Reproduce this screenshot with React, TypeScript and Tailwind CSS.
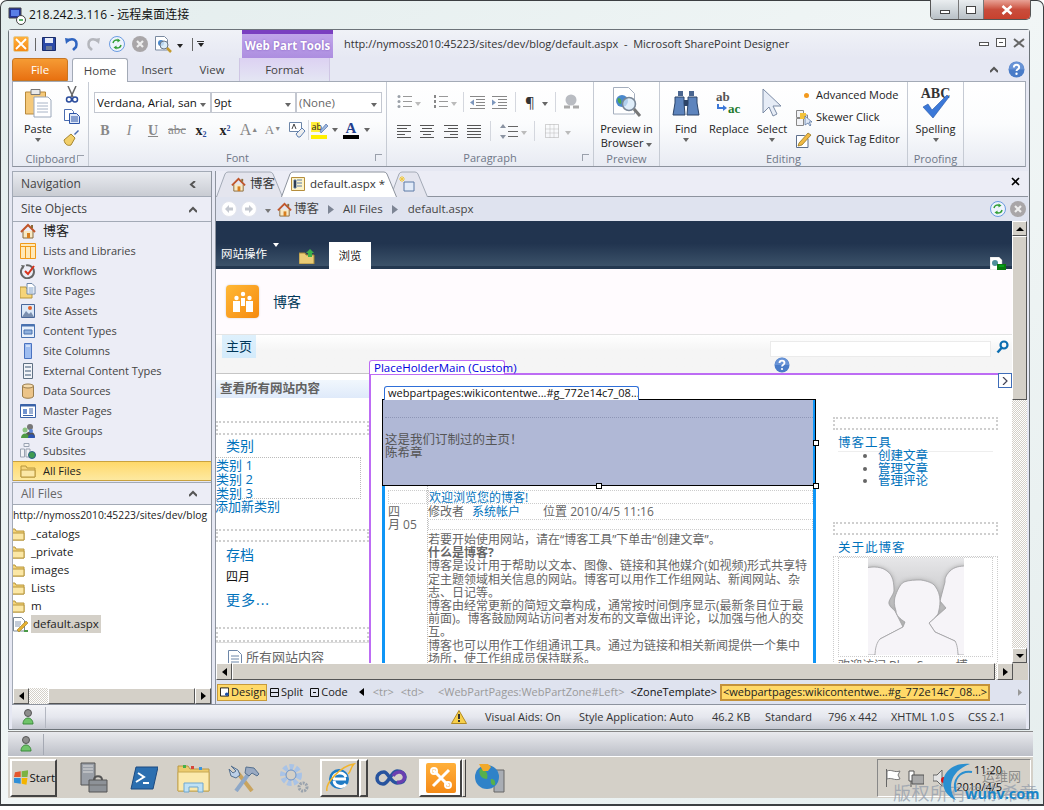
import React from 'react';

const BLUE = 'text-[#0072bc]';
const hatch = 'bg-[repeating-conic-gradient(#d4d0c8_0_25%,#ffffff_0_50%)] bg-[length:2px_2px]';
const bevel = 'bg-[#d4d0c8] border border-t-white border-l-white border-r-[#555] border-b-[#555]';

const Tri = ({ c = 'border-t-[#666]' }: { c?: string }) => (
  <span className={`inline-block w-0 h-0 border-x-[3px] border-x-transparent border-t-[4px] ${c}`} />
);

type P = { s?: number };
const FolderIc = ({ s = 16 }: P) => (
  <svg width={s} height={s} viewBox="0 0 16 16"><path d="M1 3h5l1 2h8v9H1z" fill="#f5d479" stroke="#b8963c" /><path d="M1 7h14v7H1z" fill="#fbe7a6" stroke="#b8963c" /></svg>
);
const HouseIc = ({ s = 16 }: P) => (
  <svg width={s} height={s} viewBox="0 0 16 16"><path d="M3 8v7h10V8" fill="#f8e9c4" stroke="#8a6b3a" /><path d="M1 9l7-7 7 7" fill="none" stroke="#c0552a" strokeWidth="2" /><path d="M11 2h2v3h-2z" fill="#8a6b3a" /><path d="M7 10h3v5H7z" fill="#d87f1e" /></svg>
);
const TableIc = () => (
  <svg width="16" height="16" viewBox="0 0 16 16"><path d="M.5.5h15v15H.5z" fill="#ffe9b8" stroke="#f09a1a" /><path d="M.5 3.5h15M5.5 3v12M10.5 3v12" stroke="#f09a1a" /></svg>
);
const WorkflowIc = () => (
  <svg width="16" height="16" viewBox="0 0 16 16"><path d="M3 4a6.5 6.5 0 1 0 3-1.6" fill="none" stroke="#666" strokeWidth="2" /><path d="M1 2l4 .5L3 6z" fill="#666" /><path d="M5 8l3 3 6-8" fill="none" stroke="#d8321c" strokeWidth="2" /></svg>
);
const PagesIc = () => (
  <svg width="16" height="16" viewBox="0 0 16 16"><path d="M0 4h6l1 2h5v9H0z" fill="#f5d479" stroke="#b8963c" /><path d="M7 .5h5l3 3V11H7z" fill="#fff" stroke="#6d86a8" /><path d="M8.5 5h5M8.5 7h5M8.5 9h5" stroke="#7b9cc6" /></svg>
);
const AssetsIc = () => (
  <svg width="16" height="16" viewBox="0 0 16 16"><path d="M1.5 1.5h13v13h-13z" fill="#dbe8f8" stroke="#49679a" /><path d="M2 14l4-6 3 3 2-2 3 5z" fill="#7a8fb0" /><circle cx="10" cy="5" r="2" fill="#e2622c" /></svg>
);
const CTypeIc = () => (
  <svg width="16" height="16" viewBox="0 0 16 16"><path d="M1.5 1.5h13v13h-13z" fill="#e8f0fb" stroke="#4a72b0" /><path d="M1.5 1.5h13v2h-13z" fill="#4a72b0" /><path d="M4 7h8v4H4z" fill="#8fb0dc" stroke="#4a72b0" /></svg>
);
const ColumnIc = () => (
  <svg width="16" height="16" viewBox="0 0 16 16"><path d="M4.5.5h7v15h-7z" fill="#9fbdf0" stroke="#4a72c0" /><path d="M6 3h4" stroke="#fff" /></svg>
);
const ExtIc = () => (
  <svg width="16" height="16" viewBox="0 0 16 16"><path d="M3.5.5h9v15h-9z" fill="#f1f3f8" stroke="#5f7083" /><path d="M5 4h6M5 8h6M5 12h6" stroke="#7a8ca0" strokeWidth="1.5" /></svg>
);
const DbIc = () => (
  <svg width="16" height="16" viewBox="0 0 16 16"><path d="M2.5 3v10c0 3 11 3 11 0V3z" fill="#ecc489" stroke="#9a7d4d" /><ellipse cx="8" cy="3" rx="5.5" ry="2" fill="#f6dcae" stroke="#9a7d4d" /></svg>
);
const MasterIc = () => (
  <svg width="16" height="16" viewBox="0 0 16 16"><path d="M.5 1.5h15v13H.5z" fill="#fff" stroke="#3b63a8" /><path d="M.5 1.5h15v2H.5z" fill="#3b63a8" /><path d="M3 6h4v5H3z" fill="#6f92cf" /><path d="M9 6h4M9 8h4M9 10h4M3 12.5h10" stroke="#3b63a8" /></svg>
);
const GroupsIc = () => (
  <svg width="16" height="16" viewBox="0 0 16 16"><circle cx="10" cy="4" r="3" fill="#777" /><path d="M5 14c0-7 10-7 10 0z" fill="#555" /><circle cx="5" cy="7" r="2.5" fill="#8cc480" /><path d="M1 15c0-6 8-6 8 0z" fill="#4e9a44" /><circle cx="11" cy="8" r="2" fill="#5b83d6" /><path d="M8 15c0-5 7-5 7 0z" fill="#2c54b0" /></svg>
);
const SubsitesIc = () => (
  <svg width="16" height="16" viewBox="0 0 16 16"><path d="M4 .5h5v3H4zM.5 6h4v8h-4zM6 6h4v8H6z" fill="#f2f3f7" stroke="#9aa3b2" /><circle cx="12" cy="12" r="3.5" fill="#3e9b50" stroke="#2b5f8a" /></svg>
);
const DocPenIc = () => (
  <svg width="16" height="16" viewBox="0 0 16 16"><path d="M1.5 1.5h8l3 3V15h-11z" fill="#fff" stroke="#7b8794" /><path d="M3 6h6M3 8h6M3 10h5" stroke="#8797b0" /><path d="M5 14l9-9 2 2-9 9z" fill="#e6b030" stroke="#8a6a10" strokeWidth=".5" /><path d="M12 14h4v2h-4z" fill="#4a9a48" /></svg>
);
const UserIc = () => (
  <svg width="12" height="16" viewBox="0 0 12 16"><circle cx="6" cy="4" r="3.5" fill="#8d8d8d" stroke="#555" /><path d="M1 15c0-8 10-8 10 0z" fill="#6fc46a" stroke="#3b8a3b" /></svg>
);
const HelpIc = ({ s = 16 }: P) => (
  <svg width={s} height={s} viewBox="0 0 16 16"><circle cx="8" cy="8" r="7.5" fill="#4a7cc8" /><path d="M.8 8a7.2 7.2 0 0 1 14.4 0z" fill="#7da4e0" opacity=".6" /><path d="M5.5 6c0-3.2 5-3.2 5 0 0 1.8-2.5 1.8-2.5 3.5" fill="none" stroke="#fff" strokeWidth="1.8" /><circle cx="8" cy="12" r="1.1" fill="#fff" /></svg>
);
const RefreshIc = ({ s = 16 }: P) => (
  <svg width={s} height={s} viewBox="0 0 16 16"><circle cx="8" cy="8" r="7.5" fill="#eef4fc" stroke="#6a9be0" /><path d="M4 7c.5-2.5 3-3.5 5-2.5" fill="none" stroke="#34a038" strokeWidth="1.5" /><path d="M8.5 2.5l3 2-3 2z" fill="#34a038" /><path d="M12 9c-.5 2.5-3 3.5-5 2.5" fill="none" stroke="#34a038" strokeWidth="1.5" /><path d="M7.5 9.5l-3 2 3 2z" fill="#34a038" /></svg>
);
const StopIc = ({ s = 16 }: P) => (
  <svg width={s} height={s} viewBox="0 0 16 16"><circle cx="8" cy="8" r="8" fill="#a9a6a8" /><path d="M5 5l6 6M11 5l-6 6" stroke="#eee" strokeWidth="2.2" /></svg>
);
const NavBtn = ({ d }: { d: string }) => (
  <span className="w-[16px] h-[16px] rounded-full bg-white border border-[#e4e6ee] flex items-center justify-center">
    <svg width="10" height="10" viewBox="0 0 10 10"><path d={d} fill="#c4c8d0" /></svg>
  </span>
);
const Arrow = () => <svg width="6" height="9" viewBox="0 0 6 9"><path d="M0 0l6 4.5L0 9z" fill="#7d8594" /></svg>;

// small ribbon glyphs
const Lines = ({ a }: { a: 'l' | 'c' | 'r' | 'j' }) => {
  const w = [14, 10, 14, 8, 14];
  return (
    <svg width="15" height="13" viewBox="0 0 15 13">
      {w.map((v, i) => {
        const len = a === 'j' ? 14 : v;
        const x = a === 'l' || a === 'j' ? 0 : a === 'c' ? (14 - len) / 2 : 14 - len;
        return <path key={i} d={`M${x} ${i * 3 + .5}h${len}`} stroke="#555" />;
      })}
    </svg>
  );
};
const ListIc = ({ num }: { num?: boolean }) => (
  <svg width="15" height="14" viewBox="0 0 15 14">
    {[1, 6, 11].map(y => (
      <g key={y}>
        {num ? <path d={`M1 ${y - 1}h2v3H1z`} fill="#888" /> : <circle cx="2" cy={y + .5} r="1.5" fill="#9aa0a8" />}
        <path d={`M6 ${y + .5}h9`} stroke="#999" />
      </g>
    ))}
  </svg>
);
const IndentIc = ({ out }: { out?: boolean }) => (
  <svg width="15" height="13" viewBox="0 0 15 13">
    {[.5, 3.5, 6.5, 9.5, 12.5].map(y => <path key={y} d={`M${y === .5 || y === 12.5 ? 0 : 6} ${y}h${y === .5 || y === 12.5 ? 15 : 9}`} stroke="#888" />)}
    <path d={out ? 'M0 6.5l4-3v6z' : 'M4 6.5l-4-3v6z'} fill="#7d97bd" />
  </svg>
);

const Cell = ({ w = 24, children }: { w?: number; children: React.ReactNode }) => (
  <div className="flex items-center justify-center shrink-0 h-[20px]" style={{ width: w }}>{children}</div>
);

const Combo = ({ label, w, grey }: { label: string; w: string; grey?: boolean }) => (
  <div className={`${w} h-[21px] bg-white border border-[#c3c7d0] flex items-center pl-[2px] pr-[4px] justify-between text-[11.5px] ${grey ? 'text-[#666]' : 'text-[#111]'}`}>
    <span className="overflow-hidden whitespace-nowrap">{label}</span>
    <span className="ml-[3px] shrink-0"><Tri /></span>
  </div>
);

const Group = ({ w, label, launcher, children }: { w: string; label: string; launcher?: boolean; children: React.ReactNode }) => (
  <div className={`${w} h-full shrink-0 flex flex-col border-r border-[#c6cbd4]`}>
    <div className="h-[70px]">{children}</div>
    <div className="relative h-[15px] flex items-center justify-center text-[11px] text-[#6f7787]">
      {label}
      {launcher && <span className="absolute right-[4px] top-[3px] w-[7px] h-[7px] border-l border-t border-[#9aa0ab]" />}
    </div>
  </div>
);

const BigBtn = ({ icon, label, arrow, w }: { icon: React.ReactNode; label: React.ReactNode; arrow?: boolean; w: string }) => (
  <div className={`${w} h-[70px] flex flex-col items-center pt-[5px] shrink-0`}>
    <div className="h-[32px] flex items-center justify-center">{icon}</div>
    <div className="mt-[3px] leading-[14px] text-[#222] whitespace-nowrap text-center">{label}</div>
    {arrow && <div className="h-[8px] flex items-center"><Tri /></div>}
  </div>
);

const Ribbon = () => (
  <div className="h-[86px] mx-[3px] bg-gradient-to-b from-white via-[#fbfcfd] to-[#e8ebf3] border border-[#a3aab6] border-b-[#8d939e] flex">
    <Group w="w-[76px]" label="Clipboard" launcher>
      <div className="flex">
        <BigBtn
          w="w-[50px]"
          arrow
          label="Paste"
          icon={
            <svg width="28" height="30" viewBox="0 0 28 30">
              <path d="M1.5 4h20v22h-20z" fill="#f5c97a" stroke="#b8893a" />
              <path d="M7 1.5h9v5H7z" fill="#e8e8e8" stroke="#777" />
              <path d="M10 9h14l3 3v17H10z" fill="#fff" stroke="#9aa7ba" />
              <path d="M13 15h11M13 18h11M13 21h11M13 24h11" stroke="#a8b4c6" />
            </svg>
          }
        />
        <div className="flex flex-col pt-[4px] gap-[5px] items-center w-[17px]">
          <svg width="16" height="17" viewBox="0 0 16 17"><path d="M4 0l5 11M12 0L7 11" stroke="#666" strokeWidth="1.5" /><circle cx="5" cy="13.5" r="2.5" fill="none" stroke="#2a4c9c" strokeWidth="1.5" /><circle cx="11" cy="13.5" r="2.5" fill="none" stroke="#2a4c9c" strokeWidth="1.5" /></svg>
          <svg width="16" height="16" viewBox="0 0 16 16"><path d="M.5 1.5h7l2 2v9h-9z" fill="#fff" stroke="#4a6cb0" /><path d="M5.5 5.5h7l3 3v7h-10z" fill="#dfe8f8" stroke="#2d54a6" /><path d="M7 9h7M7 11h7M7 13h7" stroke="#2d54a6" /></svg>
          <svg width="17" height="17" viewBox="0 0 17 17"><path d="M11 5l4-4 1 1-4 4z" fill="#4a6cb0" /><path d="M1 11l7-6 4 4-4 7c-3 1-6 0-7-5z" fill="#f2cf6a" stroke="#a5852e" /></svg>
        </div>
      </div>
    </Group>
    <Group w="w-[298px]" label="Font" launcher>
      <div className="pl-[5px] pt-[10px] flex">
        <Combo label="Verdana, Arial, sans" w="w-[117px]" />
        <Combo label="9pt" w="w-[85px]" />
        <Combo label="(None)" w="w-[86px]" grey />
      </div>
      <div className="pl-[4px] mt-[7px] flex items-center text-[#888]">
        <Cell><b className="font-['Liberation_Serif',serif] text-[14px]">B</b></Cell>
        <Cell><i className="font-['Liberation_Serif',serif] text-[14px]">I</i></Cell>
        <Cell><u className="font-['Liberation_Serif',serif] text-[14px] font-bold">U</u></Cell>
        <Cell><s className="font-['Liberation_Serif',serif] text-[13px]">abc</s></Cell>
        <Cell><b className="font-['Liberation_Serif',serif] text-[14px] text-[#222]">x<sub className="text-[8px] text-[#2a4c9c]">2</sub></b></Cell>
        <Cell><b className="font-['Liberation_Serif',serif] text-[14px] text-[#222]">x<sup className="text-[8px] text-[#2a4c9c]">2</sup></b></Cell>
        <Cell><span className="font-['Liberation_Serif',serif] text-[16px]">A<sup className="text-[7px]">▲</sup></span></Cell>
        <Cell><span className="font-['Liberation_Serif',serif] text-[13px]">A<sup className="text-[7px]">▼</sup></span></Cell>
        <Cell>
          <svg width="17" height="16" viewBox="0 0 17 16"><path d="M.5.5h12v9H.5z" fill="#fff" stroke="#6d86a8" /><path d="M7 12l6-6 3 3-5 6H9z" fill="#eee" stroke="#5d7fb0" /><path d="M3 7l2-5 2 5" fill="none" stroke="#444" /></svg>
        </Cell>
        <div className="w-px h-[20px] bg-[#d4d7de] mr-[1px] ml-[-1px]" />
        <Cell w={18}>
          <svg width="17" height="18" viewBox="0 0 17 18"><path d="M0 1h9v10H0z" fill="#ffef3a" /><path d="M0 14h16v4H0z" fill="#ffef00" /><text x=".5" y="9" fontSize="9" fill="#222">ab</text><path d="M9 10l6-7 2 2-7 7z" fill="#9cb6de" stroke="#3e5f9c" strokeWidth=".6" /></svg>
        </Cell>
        <Cell w={14}><Tri /></Cell>
        <Cell w={18}>
          <div className="flex flex-col items-center">
            <span className="font-['Liberation_Serif',serif] font-bold text-[15px] leading-[14px] text-[#23408e]">A</span>
            <span className="w-[16px] h-[4px] bg-black" />
          </div>
        </Cell>
        <Cell w={14}><Tri /></Cell>
      </div>
    </Group>
    <Group w="w-[207px]" label="Paragraph" launcher>
      <div className="pl-[10px] pt-[9px] flex items-center h-[31px]">
        <ListIc /><span className="mx-[3px]"><Tri c="border-t-[#bbb]" /></span>
        <span className="ml-[9px]"><ListIc num /></span><span className="mx-[3px]"><Tri c="border-t-[#bbb]" /></span>
        <span className="w-px h-[20px] bg-[#d4d7de] ml-[3px]" />
        <span className="ml-[6px]"><IndentIc out /></span>
        <span className="ml-[7px]"><IndentIc /></span>
        <span className="w-px h-[20px] bg-[#d4d7de] ml-[8px]" />
        <span className="ml-[9px] text-[15px] text-[#333]">¶</span><span className="ml-[7px]"><Tri /></span>
        <span className="w-px h-[20px] bg-[#d4d7de] ml-[7px]" />
        <span className="ml-[7px]">
          <svg width="17" height="16" viewBox="0 0 17 16"><circle cx="8" cy="6" r="5.5" fill="#b9bcc2" /><path d="M1 13h6M10 13h6" stroke="#aaa" strokeWidth="3" /></svg>
        </span>
      </div>
      <div className="pl-[10px] mt-[8px] flex items-center">
        <Lines a="l" /><span className="ml-[8px]"><Lines a="c" /></span><span className="ml-[9px]"><Lines a="r" /></span><span className="ml-[8px]"><Lines a="j" /></span>
        <span className="w-px h-[20px] bg-[#d4d7de] ml-[8px]" />
        <span className="ml-[9px]">
          <svg width="18" height="15" viewBox="0 0 18 15"><path d="M3 0l3 4H0zM3 15l3-4H0z" fill="#8a93a2" /><path d="M8 2.5h10M8 7.5h10M8 12.5h10" stroke="#666" /></svg>
        </span>
        <span className="ml-[3px]"><Tri c="border-t-[#bbb]" /></span>
        <span className="w-px h-[20px] bg-[#d4d7de] ml-[7px]" />
        <span className="ml-[10px]">
          <svg width="14" height="14" viewBox="0 0 14 14"><path d="M.5.5h13v13H.5z" fill="none" stroke="#aaa" strokeDasharray="1 1" /><path d="M.5 5h13M.5 9h13M5 .5v13M9 .5v13" stroke="#bbb" strokeDasharray="1 1" /></svg>
        </span>
        <span className="ml-[6px]"><Tri c="border-t-[#bbb]" /></span>
      </div>
    </Group>
    <Group w="w-[66px]" label="Preview">
      <BigBtn
        w="w-full"
        label={<span>Preview in<br />Browser <Tri /></span>}
        icon={
          <svg width="30" height="32" viewBox="0 0 30 32">
            <path d="M1.5.5h15l6 6V27h-21z" fill="#fff" stroke="#a5afbe" />
            <circle cx="10" cy="14" r="6" fill="#4a88cc" /><path d="M6 11c3 0 4 3 3 6-2 0-4-3-3-6z" fill="#4da84c" />
            <circle cx="17" cy="17" r="6.5" fill="#d5e8f8" fillOpacity=".75" stroke="#7a8797" strokeWidth="1.5" />
            <path d="M22 22l6 7" stroke="#777" strokeWidth="3" />
          </svg>
        }
      />
    </Group>
    <Group w="w-[248px]" label="Editing">
      <div className="flex pl-[2px]">
        <BigBtn
          w="w-[48px]" arrow label="Find"
          icon={
            <svg width="28" height="26" viewBox="0 0 28 26">
              <path d="M6 1h5v5H6zM17 1h5v5h-5z" fill="#4a6690" />
              <path d="M3 7h9v6l1 12H1l2-12zM16 7h9v6l2 12H15l1-12z" fill="#5d84bd" stroke="#2c4468" />
              <path d="M12 10h4v6h-4z" fill="#2c4468" />
            </svg>
          }
        />
        <BigBtn
          w="w-[38px]" label="Replace"
          icon={
            <svg width="28" height="26" viewBox="0 0 28 26">
              <text x="1" y="11" fontSize="13" fontFamily="Liberation Serif" fontWeight="bold" fill="#555">ab</text>
              <text x="13" y="23" fontSize="13" fontFamily="Liberation Serif" fontWeight="bold" fill="#1e7a2c">ac</text>
              <path d="M3 14v4h6" fill="none" stroke="#3c78d8" strokeWidth="2" /><path d="M8 15l4 3-4 3z" fill="#3c78d8" />
            </svg>
          }
        />
        <BigBtn
          w="w-[48px]" arrow label="Select"
          icon={<svg width="20" height="30" viewBox="0 0 20 30"><path d="M1 1v24l6-6 4 9 4-2-4-8h8z" fill="#e6ecf6" stroke="#7b8ba5" /></svg>}
        />
        <div className="pt-[4px] flex flex-col gap-[3px] text-[#222] whitespace-nowrap">
          <div className="h-[19px] flex items-center"><span className="w-[20px] flex justify-center"><span className="w-[5px] h-[5px] rounded-full bg-[#f39a1e]" /></span>Advanced Mode</div>
          <div className="h-[19px] flex items-center">
            <span className="w-[20px]"><svg width="16" height="16" viewBox="0 0 16 16"><path d="M.5.5h7v7h-7zM.5 8.5h7v7h-7zM8.5 5h3v3h-3z" fill="#f2f3f6" stroke="#888" /><path d="M4 3h6v6H4z" fill="#f3c23a" /><path d="M9 6v9l3-2 2 3 1-1-2-3h3z" fill="#dfe8f6" stroke="#4a6a9a" strokeWidth=".7" /></svg></span>
            Skewer Click
          </div>
          <div className="h-[19px] flex items-center">
            <span className="w-[20px]"><svg width="16" height="16" viewBox="0 0 16 16"><path d="M.5 3.5h8L12 7v8.5H.5z" fill="#fff" stroke="#5d6f8c" /><path d="M3 11l9-10 3 2-9 10-4 1z" fill="#f0b945" stroke="#8a6a10" strokeWidth=".7" /></svg></span>
            Quick Tag Editor
          </div>
        </div>
      </div>
    </Group>
    <Group w="w-[56px]" label="Proofing">
      <BigBtn
        w="w-full" arrow label="Spelling"
        icon={
          <div className="relative w-[34px] h-[32px] text-center">
            <span className="font-['Liberation_Serif',serif] font-bold text-[14px] leading-[14px] text-[#333] block">ABC</span>
            <svg className="absolute left-[3px] top-[7px]" width="28" height="25" viewBox="0 0 28 25"><path d="M1 13l5-3 4 6L25 1l2 2L11 24z" fill="#3b78d8" stroke="#2456a6" strokeWidth=".6" /></svg>
          </div>
        }
      />
    </Group>
  </div>
);

const navItems: [string, React.ReactNode][] = [
  ['博客', <HouseIc />], ['Lists and Libraries', <TableIc />], ['Workflows', <WorkflowIc />], ['Site Pages', <PagesIc />],
  ['Site Assets', <AssetsIc />], ['Content Types', <CTypeIc />], ['Site Columns', <ColumnIc />], ['External Content Types', <ExtIc />],
  ['Data Sources', <DbIc />], ['Master Pages', <MasterIc />], ['Site Groups', <GroupsIc />], ['Subsites', <SubsitesIc />],
];

const Chevron = ({ up }: { up?: boolean }) => (
  <svg width="8" height="7" viewBox="0 0 8 7">
    {up ? <path d="M0 6l4-4 4 4" fill="none" stroke="#555" strokeWidth="2" /> : <path d="M6 0L2 3.5 6 7" fill="none" stroke="#555" strokeWidth="2" />}
  </svg>
);

const Tip = ({ d }: { d: 'l' | 'r' | 'u' | 'b' }) => {
  const path = { l: 'M7 0v8L2 4z', r: 'M2 0v8l5-4z', u: 'M0 6h8L4 2z', b: 'M0 2h8L4 6z' }[d];
  return <svg width="8" height="8" viewBox="0 0 8 8"><path d={path} fill="#000" /></svg>;
};

const NavPanel = () => (
  <div className="w-[200px] h-full shrink-0 flex flex-col border-r border-[#8d939e] text-[11px] text-[#444]">
    <div className="h-[26px] bg-gradient-to-b from-[#e9ebf0] to-[#c9ccd3] border border-[#a3aab6] border-r-0 flex items-center justify-between pl-[8px] pr-[14px] text-[12px]">
      Navigation <Chevron />
    </div>
    <div className="h-[25px] bg-[#ecedf6] border-b border-[#a3aab6] border-l border-l-[#a3aab6] flex items-center justify-between pl-[8px] pr-[14px] text-[12px]">
      Site Objects <Chevron up />
    </div>
    <div className="bg-[#ecedf6] border-l border-[#a3aab6]">
      {navItems.map(([label, icon], i) => (
        <div key={label} className={`flex items-center pl-[7px] ${i === 0 ? 'h-[19px] -mt-px mb-px text-[13px] text-[#222]' : 'h-[20px]'}`}>
          <span className="w-[23px] shrink-0">{icon}</span>{label}
        </div>
      ))}
      <div className="h-[20px] flex items-center pl-[7px] bg-gradient-to-b from-[#ffd868] to-[#fde9a0] border-y border-[#c9a23f] text-[#222]">
        <span className="w-[23px]"><FolderIc /></span>All Files
      </div>
    </div>
    <div className="h-[23px] mt-[1px] bg-[#ecedf6] border-y border-[#a3aab6] border-l border-l-[#a3aab6] flex items-center justify-between pl-[8px] pr-[14px] text-[12px] text-[#666]">
      All Files <Chevron up />
    </div>
    <div className="flex-1 min-h-0 bg-white border-l border-[#a3aab6] overflow-hidden text-[11.5px] text-[#222]">
      <div className="h-[19px] mt-[1px] whitespace-nowrap flex items-center text-[10.3px]">http://nymoss2010:45223/sites/dev/blog</div>
      {['_catalogs', '_private', 'images', 'Lists', 'm'].map(f => (
        <div key={f} className="h-[18px] flex items-center">
          <span className="w-[16px] -ml-[4px] mr-[6px] shrink-0 overflow-hidden"><FolderIc /></span>{f}
        </div>
      ))}
      <div className="h-[18px] flex items-center">
        <span className="w-[16px] -ml-[1px] mr-[3px] shrink-0"><DocPenIc /></span>
        <span className="bg-[#d4d0c8] h-[18px] flex items-center px-[2px]">default.aspx</span>
      </div>
    </div>
    <div className="h-[16px] shrink-0 flex border-l border-[#a3aab6]">
      <div className={`${bevel} w-[16px] flex items-center justify-center`}><Tip d="l" /></div>
      <div className={`${hatch} w-[19px]`} />
      <div className={`${bevel} flex-1`} />
      <div className={`${bevel} w-[16px] flex items-center justify-center`}><Tip d="r" /></div>
    </div>
  </div>
);

const Zone = ({ h, w = 'w-full', children }: { h: string; w?: string; children?: React.ReactNode }) => (
  <div className={`${h} ${w} border-2 border-dotted border-[#cfcfcf]`}>{children}</div>
);

const LeftCol = () => (
  <div className="w-[153px] shrink-0 border-t border-[#c6c6c6] bg-white">
    <div className="mt-[6px] h-[18px] bg-gradient-to-b from-[#f1f7fd] to-[#dfeafa] pl-[4px] flex items-center font-bold text-[12.5px] text-[#626262] whitespace-nowrap">查看所有网站内容</div>
    <Zone h="h-[14px] mt-[23px]" />
    <div className={`h-[20px] pl-[10px] flex items-center text-[14px] ${BLUE}`}>类别</div>
    <div className={`mt-[2px] h-[42px] w-[146px] -ml-px border border-dotted border-[#bbb] text-[13px] leading-[14px] ${BLUE}`}>
      <div>类别 1</div><div>类别 2</div><div>类别 3</div>
    </div>
    <div className={`-ml-px h-[14px] text-[13px] leading-[14px] whitespace-nowrap ${BLUE}`}>添加新类别</div>
    <Zone h="h-[13px] mt-[16px]" />
    <div className={`mt-[1px] h-[22px] pl-[10px] flex items-center text-[14px] ${BLUE}`}>存档</div>
    <div className="mt-[1px] h-[22px] pl-[10px] flex items-center text-[12px] text-[#111]">四月</div>
    <div className={`h-[22px] pl-[10px] flex items-center text-[14px] tracking-[1px] ${BLUE}`}>更多...</div>
    <Zone h="h-[15px] mt-[17px]" />
    <div className="h-px bg-[#ddd]" />
    <div className="mt-[5px] pl-[12px] flex items-center gap-[4px] text-[13px] text-[#666] whitespace-nowrap">
      <svg width="14" height="16" viewBox="0 0 14 16"><path d="M.5.5h9l4 4v11H.5z" fill="#fff" stroke="#6d86a8" /><path d="M3 6h8M3 9h8M3 12h8" stroke="#6d86a8" /></svg>
      所有网站内容
    </div>
  </div>
);

const bodyLines = [
  ['若要开始使用网站，请在“博客工具”下单击“创建文章”。'],
  ['什么是博客?', 'b'],
  ['博客是设计用于帮助以文本、图像、链接和其他媒介(如视频)形式共享特'],
  ['定主题领域相关信息的网站。博客可以用作工作组网站、新闻网站、杂'],
  ['志、日记等。'],
  ['博客由经常更新的简短文章构成，通常按时间倒序显示(最新条目位于最'],
  ['前面)。博客鼓励网站访问者对发布的文章做出评论，以加强与他人的交'],
  ['互。'],
  ['博客也可以用作工作组通讯工具。通过为链接和相关新闻提供一个集中'],
  ['场所，使工作组成员保持联系。'],
];

const Silhouette = () => (
  <svg width="96" height="97" viewBox="0 0 96 97" className="shrink-0">
    <defs>
      <linearGradient id="sg" x1="0" y1="0" x2="0" y2="1"><stop offset="0" stopColor="#e6e6e8" /><stop offset=".6" stopColor="#bdbdbf" /><stop offset="1" stopColor="#dcdcde" /></linearGradient>
    </defs>
    <path d="M0 0h96v97H0z" fill="url(#sg)" />
    <g fill="#f6f4f8" stroke="#a0a0a2" strokeWidth=".8" className="[filter:drop-shadow(0_0_2px_#aaa)]">
      <path d="M-2 10C6 8 14 9 19 13c6 4 7 12 7 20-1 5-6 9-5 13 1 3 4 5 6 7l8 16-23 12-5 16H-2z" />
      <path d="M98 8c-6 0-12 1-16 5-5 5-5 8-5 11l-5 19 6 7-17 15 6 9 20 9 3 14h8z" />
      <path d="M7 98c0-8 2-14 5-17l23-12 2-5c-5-3-9-7-9-11-2-6-2-10-1-14 2-6 5-13 9-15 5-2 12-2 17-2 6 1 12 3 14 6 3 4 5 9 5 15 0 5-1 9-2 13-3 4-6 6-9 9l6 9 20 9c2 3 3 9 3 15z" />
    </g>
  </svg>
);

const Canvas = () => (
  <div className="relative w-[796px] h-[442px] shrink-0 overflow-hidden bg-white">
    <div className="relative z-[1] h-[48px] bg-gradient-to-b from-[#21344f] from-50% to-[#3c5269] flex items-end pl-[5px] border-b-[3px] border-[#243850]">
      <span className="text-[11.5px] text-white h-[22px] mb-[1px] flex items-center whitespace-nowrap">网站操作</span>
      <span className="ml-[6px] mb-[15px]"><Tri c="border-t-white" /></span>
      <span className="ml-[20px] mb-[2px]">
        <svg width="16" height="15" viewBox="0 0 16 15"><path d="M0 4h6l1 2h8v9H0z" fill="#e9cc76" stroke="#a58838" /><path d="M11 0l4 4h-2v4H9V4H7z" fill="#3cb04a" /></svg>
      </span>
      <span className="ml-[14px] w-[42px] h-[27px] bg-white -mb-[3px] flex items-center justify-center text-[11.5px] text-[#222]">浏览</span>
      <span className="ml-auto mr-[6px] -mb-[4px]">
        <svg width="16" height="13" viewBox="0 0 16 13"><path d="M0 0h9l3 3v10H0z" fill="#fff" stroke="#bbb" strokeWidth=".5" /><circle cx="5" cy="6" r="3" fill="#4f8f9a" /><path d="M7 7h9v6H7z" fill="#0a7a10" /><path d="M9 9h5" stroke="#0c2" /></svg>
      </span>
    </div>
    <div className="h-[65px] bg-[#fffbfe] flex items-center pl-[10px] border-b border-[#e4e4e4] box-content -mb-px">
      <span className="w-[33px] h-[33px] rounded-[4px] bg-gradient-to-br from-[#ffb834] to-[#f58a0c] flex items-center justify-center shadow-[0_0_2px_#c9c9c9]">
        <svg width="24" height="24" viewBox="0 0 24 24"><circle cx="12" cy="4" r="2.2" fill="#fff" /><circle cx="5.5" cy="8" r="2.2" fill="#fff" /><circle cx="18.5" cy="8" r="2.2" fill="#fff" /><path d="M2 11h7v11H2zM15 11h7v11h-7zM10 8h4v8h-4z" fill="#fff" /></svg>
      </span>
      <span className="ml-[14px] text-[14px] text-[#003759]">博客</span>
    </div>
    <div className="relative h-[38px] mt-px bg-gradient-to-b from-white to-[#f5f5f5] to-40% pl-[6px] flex items-start">
      <span className="h-[23px] w-[34px] bg-gradient-to-b from-[#def0fc] to-[#d4ebfb] flex items-center justify-center text-[13px] text-[#003759]">主页</span>
      <div className="ml-[514px] mt-[6px] w-[221px] h-[16px] bg-white border border-[#ebebeb]" />
      <svg className="ml-[5px] mt-[5px]" width="13" height="14" viewBox="0 0 13 14"><circle cx="8" cy="5" r="3.5" fill="none" stroke="#0b6db0" strokeWidth="2.2" /><path d="M5.5 8L1.5 12.5" stroke="#0b6db0" strokeWidth="2.5" /></svg>
    </div>
    <div className="flex h-[290px]">
      <LeftCol />
      <div className="flex-1 min-w-0 border-l-2 border-t-2 border-[#bd6cf4] flex items-start pl-[11px]">
        <div className="w-[434px] shrink-0 mt-[24px] relative h-[300px] border-x-[3px] border-[#0e95f6]">
          <div className="-mx-[3px] h-[87px] bg-[#b0b8d6] border border-black px-[2px] pt-[17px] text-[12.5px] leading-[13px] text-[#555] shadow-[inset_-2px_0_#0e95f6]">
            <div className="border-t border-dotted border-[#8e96b6] pt-[15px] whitespace-nowrap">
              <div>这是我们订制过的主页！</div>
              <div>陈希章</div>
            </div>
          </div>
          <div className="flex">
            <div className="w-[43px] pl-[3px] pt-[4px] shrink-0 border-r border-dotted border-[#bbb]">
              <div className="h-[14px] w-full border border-dotted border-[#ccc]" />
              <div className="mt-[1px] text-[12px] leading-[13px] text-[#666] whitespace-nowrap">四<br />月 05</div>
            </div>
            <div className="pt-[4px] flex-1 min-w-0 text-[12px] leading-[13.2px] text-[#666] whitespace-nowrap">
              <div className={`h-[14px] border border-dotted border-[#ccc] leading-[13px] ${BLUE}`}>欢迎浏览您的博客!</div>
              <div className="h-[15px] leading-[15px] flex">修改者<span className={`ml-[8px] ${BLUE}`}>系统帐户</span><span className="ml-[23px]">位置 2010/4/5 11:16</span></div>
              <div className="h-[11px] mb-[3px] border border-dotted border-[#ccc]" />
              {bodyLines.map(([t, b]) => <div key={t} className={b ? 'font-bold' : ''}>{t}</div>)}
            </div>
          </div>
        </div>
        <div className="ml-[17px] w-[165px] shrink-0 mt-[42px]">
          <Zone h="h-[13px]" />
          <div className={`mt-[5px] ml-[5px] w-[155px] h-[17px] border-b border-[#eee] text-[12.5px] leading-[16px] tracking-[1px] ${BLUE}`}>博客工具</div>
          <ul className={`-mt-[2px] pl-[45px] text-[12.5px] leading-[12.7px] list-disc marker:text-[#666] ${BLUE}`}>
            <li>创建文章</li><li>管理文章</li><li>管理评论</li>
          </ul>
          <Zone h="h-[13px] mt-[34px]" />
          <div className={`mt-[4px] ml-[5px] h-[17px] text-[12.5px] leading-[17px] tracking-[1px] ${BLUE}`}>关于此博客</div>
          <div className="border border-dotted border-[#ccc] h-[120px] px-[4px]">
            <div className="border border-dotted border-[#ccc] h-[100px] flex justify-center overflow-hidden"><Silhouette /></div>
            <div className="text-[12px] text-[#666] whitespace-nowrap overflow-hidden">欢迎访问 Blog Server 博</div>
          </div>
        </div>
      </div>
    </div>
    {/* designer overlays */}
    <div className="absolute left-[153px] top-[139px] w-[136px] h-[14px] border border-b-0 border-[#bd6cf4] rounded-t-[3px] bg-white flex items-center pl-[4px] text-[11.5px] text-[#0000e0] whitespace-nowrap">PlaceHolderMain (Custom)</div>
    <div className="absolute left-[558px] top-[136px]"><HelpIc /></div>
    <div className="absolute left-[782px] top-[152px] w-[14px] h-[15px] bg-white border border-[#3e6cb8] flex items-center justify-center">
      <svg width="6" height="8" viewBox="0 0 6 8"><path d="M1 0l4 4-4 4" fill="none" stroke="#445" strokeWidth="1.2" /></svg>
    </div>
    <div className="absolute left-[168px] top-[165px] w-[255px] h-[14px] border border-b-0 border-[#2f6fd8] rounded-t-[3px] bg-white flex items-center pl-[3px] text-[11px] text-[#111] whitespace-nowrap overflow-hidden">webpartpages:wikicontentwe...#g_772e14c7_08...</div>
    {[[380, 262], [597, 219], [597, 262]].map(([l, t]) => (
      <span key={`${l}-${t}`} className="absolute w-[6px] h-[6px] bg-white border border-black" style={{ left: l, top: t }} />
    ))}
  </div>
);

// slanted document tab, the outline is a drawing behind the label
const DocTab = ({ w, active, className, children }: { w: number; active?: boolean; className: string; children: React.ReactNode }) => (
  <div className={`relative h-[26px] shrink-0 ${className}`} style={{ width: w }}>
    <svg className="absolute inset-0" width={w} height="26">
      <path
        d={`M.5 26L${9} 3Q10 1 12 1H${w - 13}Q${w - 11} 1 ${w - 10} 3L${w - .5} 26`}
        fill={active ? '#fff' : '#e4e5ee'}
        stroke={active ? '#8d939e' : '#a3aab6'}
      />
    </svg>
    <div className="relative h-full flex items-center">{children}</div>
  </div>
);

const MainPanel = () => (
  <div className="w-[813px] h-full shrink-0 ml-[3px] flex flex-col border-l border-[#8d939e]">
    <div className="h-[26px] bg-[#ecedf6] border-b border-[#8d939e] flex items-end relative text-[12px] text-[#333]">
      <DocTab w={67} className="-mb-px" >
        <span className="ml-[15px] mr-[4px]"><HouseIc s={15} /></span><span className="text-[12.5px]">博客</span>
      </DocTab>
      <DocTab w={116} active className="-ml-[2px] -mb-px z-[1]">
        <span className="ml-[10px] mr-[5px]">
          <svg width="14" height="14" viewBox="0 0 14 14"><path d="M.5.5h13v13H.5z" fill="#fdf3c8" stroke="#b58e3c" /><path d="M3 3h2v8H3zM6 3h5M6 6h5M6 9h5" stroke="#5a7aa8" /></svg>
        </span>
        <span className="text-[11.5px] whitespace-nowrap">default.aspx *</span>
      </DocTab>
      <DocTab w={38} className="-ml-[7px] -mb-px">
        <span className="ml-[9px]">
          <svg width="16" height="16" viewBox="0 0 16 16"><path d="M5 6h10v9H5z" fill="#e2ebf8" stroke="#5d7ba6" /><path d="M3 0v6M0 3h6M1 1l4 4M5 1L1 5" stroke="#f1c83d" /></svg>
        </span>
      </DocTab>
      <span className="absolute right-[8px] top-[6px]">
        <svg width="9" height="9" viewBox="0 0 9 9"><path d="M1 1l7 7M8 1L1 8" stroke="#000" strokeWidth="1.6" /></svg>
      </span>
    </div>
    <div className="h-[24px] bg-[#dfe3ef] flex items-center pl-[5px] text-[11.5px] text-[#444]">
      <NavBtn d="M1 5l4-4v2.5h4v3H5V9z" />
      <span className="ml-[4px]"><NavBtn d="M9 5L5 1v2.5H1v3h4V9z" /></span>
      <span className="ml-[8px]"><Tri c="border-t-[#777]" /></span>
      <span className="ml-[6px]"><HouseIc s={15} /></span>
      <span className="ml-[2px] text-[12.5px]">博客</span>
      <span className="ml-[9px]"><Arrow /></span>
      <span className="ml-[9px]">All Files</span>
      <span className="ml-[9px]"><Arrow /></span>
      <span className="ml-[10px]">default.aspx</span>
      <span className="ml-auto"><RefreshIc /></span>
      <span className="ml-[4px] mr-[2px]"><StopIc /></span>
    </div>
    <div className="flex h-[442px] shrink-0">
      <Canvas />
      <div className="w-[15px] flex flex-col">
        <div className={`${bevel} h-[15px] flex items-center justify-center`}><Tip d="u" /></div>
        <div className={`${bevel} h-[164px]`} />
        <div className={`${hatch} flex-1`} />
        <div className={`${bevel} h-[15px] flex items-center justify-center`}><Tip d="b" /></div>
      </div>
    </div>
    <div className="h-[17px] shrink-0 flex bg-[#d4d0c8]">
      <div className={`${bevel} w-[16px] flex items-center justify-center`}><Tip d="l" /></div>
      <div className={`${bevel} w-[763px]`} />
      <div className={`${hatch} flex-1`} />
      <div className={`${bevel} w-[16px] flex items-center justify-center`}><Tip d="r" /></div>
      <div className="w-[15px]" />
    </div>
    <div className="flex-1 min-h-0 bg-[#dfe3ef] flex items-center text-[11px] text-[#222] pl-[1px] whitespace-nowrap">
      <div className="h-[17px] w-[50px] bg-[#ffd968] border border-[#c79a3a] flex items-center pl-[2px] gap-[2px]">
        <svg width="10" height="10" viewBox="0 0 10 10"><path d="M.5.5h9v9h-9z" fill="#fff" stroke="#111" /><circle cx="7.5" cy="7.5" r="2" fill="#1a4fa8" /></svg>Design
      </div>
      <span className="ml-[3px] flex items-center gap-[2px]"><svg width="9" height="9" viewBox="0 0 9 9"><path d="M.5.5h8v8h-8zM.5 4.5h8" fill="none" stroke="#111" /></svg>Split</span>
      <span className="ml-[7px] flex items-center gap-[2px]"><svg width="9" height="9" viewBox="0 0 9 9"><path d="M.5.5h8v8h-8z" fill="none" stroke="#111" /><path d="M3 4h3v1H3z" fill="#111" /></svg>Code</span>
      <span className="ml-[9px] mr-[8px]"><Tip d="l" /></span>
      <span className="text-[#9a9a9a]">&lt;tr&gt;</span>
      <span className="ml-[7px] text-[#9a9a9a]">&lt;td&gt;</span>
      <span className="ml-[14px] text-[#9a9a9a]">&lt;WebPartPages:WebPartZone#Left&gt;</span>
      <span className="ml-[6px] text-[#111]">&lt;ZoneTemplate&gt;</span>
      <span className="ml-[3px] h-[17px] w-[270px] bg-[#ffd968] border-2 border-[#c4923a] flex items-center pl-[1px] text-[#222] overflow-hidden">&lt;webpartpages:wikicontentwe...#g_772e14c7_08...&gt;</span>
      <span className="ml-auto mr-[6px]"><svg width="4" height="7" viewBox="0 0 4 7"><path d="M0 0l4 3.5L0 7z" fill="#999" /></svg></span>
    </div>
  </div>
);

const StatusBar = () => (
  <div className="h-[25px] mx-[3px] bg-gradient-to-b from-[#f3f4f8] via-[#e5e7ee] to-[#c4c7d0] border-t border-[#8d939e] flex items-center text-[11px] text-[#333] whitespace-nowrap">
    <span className="ml-[10px]"><UserIc /></span>
    <span className="w-px h-[21px] bg-[#b3b7c1] ml-[11px]" />
    <span className="ml-[405px]">
      <svg width="16" height="14" viewBox="0 0 16 14"><path d="M8 .5L15.5 13.5H.5z" fill="#f6cf4a" stroke="#b38b21" /><path d="M7 4h2v5H7zM7 10h2v2H7z" fill="#333" /></svg>
    </span>
    <span className="ml-[18px] w-[94px]">Visual Aids: On</span>
    <span className="w-[133px]">Style Application: Auto</span>
    <span className="w-[53px]">46.2 KB</span>
    <span className="w-[63px]">Standard</span>
    <span className="w-[63px]">796 x 442</span>
    <span className="w-[77px]">XHTML 1.0 S</span>
    <span>CSS 2.1</span>
  </div>
);

const Taskbar = () => (
  <div className="h-[42px] bg-[#d4d0c8] border-t border-white flex items-center pl-[2px] pr-[2px]">
    <div className="w-[47px] h-[38px] bg-[#d4d0c8] border-2 border-t-white border-l-white border-r-[#444] border-b-[#444] flex items-center gap-[1px] pl-[2px] text-[11.5px] text-[#111]">
      <svg width="15" height="15" viewBox="0 0 15 15"><path d="M1 2l6-1v6H0z" fill="#e4572e" /><path d="M8 1l7-1-1 7H8z" fill="#7cb342" /><path d="M0 8h7v6l-7-1z" fill="#2f8fd8" /><path d="M8 8h6l-1 7-5-1z" fill="#f4b400" /></svg>
      Start
    </div>
    <div className="ml-[19px] w-[36px] flex justify-center">
      <svg width="30" height="32" viewBox="0 0 30 32"><path d="M2 1h14v22H2z" fill="#9a9fa7" stroke="#555" /><path d="M4 4h10M4 7h10M4 10h10" stroke="#dcdcdc" /><path d="M10 18h18v12H10z" fill="#8d9298" stroke="#555" /><path d="M15 18c0-5 8-5 8 0" fill="none" stroke="#555" strokeWidth="2" /><path d="M10 23h18" stroke="#666" /></svg>
    </div>
    <div className="ml-[14px] w-[36px] flex justify-center">
      <svg width="28" height="24" viewBox="0 0 28 24"><path d="M6 1h22l-5 22H1z" fill="#2c6fb0" stroke="#1c4a80" /><path d="M8 7l6 4-8 5" fill="none" stroke="#fff" strokeWidth="2" /><path d="M13 17h6" stroke="#fff" strokeWidth="2" /></svg>
    </div>
    <div className="ml-[14px] w-[36px] flex justify-center">
      <svg width="34" height="30" viewBox="0 0 34 30"><path d="M1 3h10l2 3h19v22H1z" fill="#eccb6e" stroke="#b99843" /><path d="M1 9h31v19H1z" fill="#fbe9ad" stroke="#c8a955" /><path d="M6 2h3v3H6z" fill="#46b04a" /><path d="M14 3h3v3h-3z" fill="#d8463a" /><path d="M22 4h3v3h-3z" fill="#3c94dc" /><path d="M7 29v-9h19v9h-5v-5H12v5z" fill="#bfe1f4" stroke="#6ea7d0" /></svg>
    </div>
    <div className="ml-[14px] w-[36px] flex justify-center">
      <svg width="32" height="28" viewBox="0 0 32 28"><path d="M24 27L10 9" stroke="#c9a45e" strokeWidth="4" /><path d="M3 2l7 4 2 5-4 3-5-2-2-7 4 4 3-2z" fill="#bcd0e8" stroke="#56718f" /><path d="M8 27L22 8" stroke="#8ea8c8" strokeWidth="4" /><path d="M18 3l8 1 5 6-2 2-5-3-3 3-4-3z" fill="#9aaac2" stroke="#56718f" /></svg>
    </div>
    <div className="ml-[14px] w-[36px] flex justify-center">
      <svg width="34" height="32" viewBox="0 0 34 32"><circle cx="14" cy="13" r="8" fill="none" stroke="#a9c3e6" strokeWidth="6" strokeDasharray="4 2" /><circle cx="14" cy="13" r="5" fill="none" stroke="#6f95c8" /><circle cx="26" cy="25" r="4" fill="none" stroke="#9aa3ad" strokeWidth="3" strokeDasharray="2 1" /></svg>
    </div>
    <div className="ml-[8px] h-[38px] w-[48px] flex">
      <div className="w-[39px] border-2 border-t-white border-l-white border-r-[#444] border-b-[#444] flex items-center justify-center">
        <svg width="32" height="32" viewBox="0 0 32 32"><circle cx="15" cy="17" r="10" fill="#1f7bc4" /><path d="M9 17h13M9 17c0-7 11-8 13-2M10 19c1 6 9 7 12 3" fill="none" stroke="#fff" strokeWidth="3" /><path d="M3 29C1 22 16 4 30 2 26 6 27 10 24 12" fill="none" stroke="#f3b42a" strokeWidth="1.5" /></svg>
      </div>
      <div className="w-[9px] border-2 border-t-white border-l-white border-r-[#444] border-b-[#444]" />
    </div>
    <div className="ml-[5px] w-[36px] flex justify-center">
      <svg width="32" height="18" viewBox="0 0 32 18"><path d="M9 3c4 0 7 11 13 11 6 0 8-3 8-6s-3-6-8-6C16 2 14 15 8 15c-4 0-6-3-6-6s3-6 7-6z" fill="none" stroke="#27539e" strokeWidth="3.5" /><path d="M18 7c2-4 9-6 11-1s-3 8-7 7" fill="none" stroke="#6a3fb0" strokeWidth="3.5" /></svg>
    </div>
    <div className="ml-[10px] h-[38px] w-[48px] flex">
      <div className="w-[43px] border-2 border-t-white border-l-white border-r-[#444] border-b-[#444] bg-white flex items-center justify-center">
        <div className="w-[30px] h-[30px] rounded-[2px] bg-gradient-to-b from-[#ffb03a] to-[#f58a14] flex items-center justify-center">
          <svg width="24" height="24" viewBox="0 0 24 24"><path d="M4 4l16 16M20 4L4 20" stroke="#fff" strokeWidth="3" /><circle cx="5" cy="5" r="3" fill="none" stroke="#fff" strokeWidth="2" /><circle cx="19" cy="19" r="3" fill="none" stroke="#fff" strokeWidth="2" /></svg>
        </div>
      </div>
      <div className="w-[4px] border border-t-white border-l-white border-r-[#444] border-b-[#444]" />
    </div>
    <div className="ml-[5px] w-[36px] flex justify-center">
      <svg width="32" height="32" viewBox="0 0 32 32"><path d="M20 8h10v22H20z" fill="#a9adb4" stroke="#666" /><circle cx="13" cy="15" r="12" fill="#2f82c8" /><path d="M6 7c5 0 9 4 7 10-5 0-9-4-7-10zM17 17c3 0 5 2 4 6-3 1-5-2-4-6z" fill="#57b04c" /><path d="M5 2h9l3 3-3 4H9z" fill="#f1a92a" /></svg>
    </div>
    <div className="ml-auto w-[154px] h-[38px] border border-t-[#888] border-l-[#888] border-r-white border-b-white flex items-center text-[11px] text-[#111] relative">
      <svg className="ml-[7px]" width="16" height="18" viewBox="0 0 16 18"><path d="M1.5 0v18" stroke="#666" /><path d="M2 2c5-2 7 2 13 0l-2 4 2 4c-6 2-8-2-13 0z" fill="#fff" stroke="#777" /></svg>
      <svg className="ml-[7px]" width="16" height="18" viewBox="0 0 16 18"><path d="M1 2h5v10H1z" fill="#fff" stroke="#555" /><path d="M4 6h12v9H4z" fill="#a9a9a9" stroke="#555" /><path d="M3 12v6" stroke="#555" /></svg>
      <svg className="ml-[9px]" width="14" height="18" viewBox="0 0 14 18"><path d="M0 6h4l5-5v16l-5-5H0z" fill="#e4e4e4" stroke="#666" /><circle cx="11" cy="11" r="3" fill="#e01010" /></svg>
      <div className="absolute right-[28px] top-[1px] leading-[17px] text-right whitespace-nowrap">11:20<br />2010/4/5</div>
    </div>
  </div>
);

export default function App() {
  return (
    <div className="relative w-[1044px] h-[810px] overflow-hidden bg-white font-['Open_Sans','Noto_Sans_CJK_SC',sans-serif] text-[11px] text-[#333]">
      <div className="h-[806px] border border-[#3c3f42] border-b-2 rounded-t-[7px] bg-gradient-to-br from-[#e3eded] via-[#f1f6f6] to-[#e6eeee] flex flex-col">
        <div className="h-[28px] shrink-0 flex items-start pl-[7px] relative">
          <svg className="mt-[6px]" width="18" height="18" viewBox="0 0 18 18"><path d="M1 1h12v10H1z" fill="#23339a" stroke="#444" /><path d="M3 3h8v6H3z" fill="#5a7fe6" /><circle cx="13" cy="13" r="4.5" fill="#fff" stroke="#444" /><path d="M11 13h4" stroke="#2a9a3a" strokeWidth="1.5" /></svg>
          <span className="ml-[3px] mt-[6px] text-[12px] leading-[16px] text-[#111] whitespace-nowrap">218.242.3.116 - 远程桌面连接</span>
          <div className="absolute right-[12px] top-[-1px] h-[20px] flex border border-t-0 border-[#555] rounded-b-[5px] overflow-hidden">
            <div className="w-[27px] bg-gradient-to-b from-[#eaeef0] to-[#b8c0c6] flex items-center justify-center"><span className="w-[10px] h-[4px] bg-white border border-[#444] mt-[4px]" /></div>
            <div className="w-[26px] bg-gradient-to-b from-[#eaeef0] to-[#b8c0c6] border-x border-[#777] flex items-center justify-center"><span className="w-[10px] h-[8px] bg-white border-[1.5px] border-[#444]" /></div>
            <div className="w-[46px] bg-gradient-to-b from-[#e8a296] via-[#c94d3c] to-[#c8412e] flex items-center justify-center">
              <svg width="12" height="10" viewBox="0 0 12 10"><path d="M1.5 1l9 8M10.5 1l-9 8" stroke="#fff" strokeWidth="2.5" /></svg>
            </div>
          </div>
        </div>
        <div className="w-[1025px] ml-[7px] flex flex-col">
          <div className="w-[1022px] h-[701px] border border-[#6c7379] rounded-t-[3px] bg-[#e6e8f3] flex flex-col">
            <div className="flex h-[28px] shrink-0 bg-gradient-to-b from-[#f0f2f7] to-[#e6e8f3]">
              <div className="w-[233px] flex items-center pl-[4px] gap-[6px]">
                <span className="w-[16px] h-[16px] rounded-[2px] bg-gradient-to-b from-[#ffb03a] to-[#f58a14] border border-[#e2cd9f] flex items-center justify-center">
                  <svg width="12" height="12" viewBox="0 0 12 12"><path d="M1 1l10 10M11 1L1 11" stroke="#fff" strokeWidth="1.8" /></svg>
                </span>
                <span className="w-px h-[13px] bg-[#666]" />
                <svg width="14" height="14" viewBox="0 0 14 14"><path d="M.5.5h13v13H.5z" fill="#2c4aa8" stroke="#1a2c68" /><path d="M3 1h8v5H3z" fill="#e8ecf8" /><path d="M4 9h6v4H4z" fill="#6d7a95" /></svg>
                <svg className="ml-[3px]" width="14" height="14" viewBox="0 0 14 14"><path d="M2 4c6-4 11-1 9 6l-3 3" fill="none" stroke="#2f64c0" strokeWidth="2.5" /><path d="M0 1l6 1-5 5z" fill="#2f64c0" /></svg>
                <svg className="ml-[1px]" width="14" height="14" viewBox="0 0 14 14"><path d="M12 4C6 0 1 3 3 10l3 3" fill="none" stroke="#b4b6bc" strokeWidth="2.5" /><path d="M14 1L8 2l5 5z" fill="#b4b6bc" /></svg>
                <span className="ml-[3px]"><RefreshIc /></span>
                <span className="ml-[1px]"><StopIc /></span>
                <svg className="ml-[1px]" width="17" height="17" viewBox="0 0 17 17"><path d="M.5.5h9l3 3V14H.5z" fill="#fff" stroke="#7a8aa0" /><circle cx="6" cy="7" r="3" fill="#4a88cc" /><circle cx="9" cy="9" r="4" fill="#d5e8f8" fillOpacity=".8" stroke="#6b7686" /><path d="M12 12l4 4" stroke="#c49a2e" strokeWidth="2.5" /></svg>
                <span className="-ml-[1px]"><Tri c="border-t-[#222]" /></span>
                <span className="w-px h-[13px] bg-[#666] ml-[3px]" />
                <span className="-ml-[2px] flex flex-col items-center gap-[1px]"><span className="w-[7px] h-px bg-[#333]" /><Tri c="border-t-[#222]" /></span>
              </div>
              <div className="w-[91px] bg-gradient-to-b from-[#c0a5ea] to-[#ad8ee0] border-t-[4px] border-[#7a3fc0] flex items-center justify-center text-[11.5px] font-bold text-white [text-shadow:0_0_2px_#7b52b8]">Web Part Tools</div>
              <span className="ml-[11px] mt-[6px] text-[11px] leading-[16px] text-[#333] whitespace-pre">http://nymoss2010:45223/sites/dev/blog/default.aspx  -  Microsoft SharePoint Designer</span>
              <div className="ml-auto mr-[4px] mt-[7px] flex items-center gap-[7px] h-[11px]">
                <span className="w-[10px] h-[4px] border border-[#555] mt-[3px] bg-white" />
                <span className="w-[10px] h-[9px] border border-[#555] bg-white flex items-center justify-center"><span className="w-[4px] h-px bg-[#555]" /></span>
                <svg width="12" height="10" viewBox="0 0 12 10"><path d="M1 1l10 8M11 1L1 9" stroke="#666" strokeWidth="2" /></svg>
              </div>
            </div>
            <div className="flex h-[23px] shrink-0 relative text-[11.5px] text-[#444]">
              <div className="ml-[3px] w-[56px] bg-gradient-to-b from-[#f59b33] to-[#e8700f] border border-[#c67624] rounded-t-[3px] flex items-center justify-center text-white">File</div>
              <div className="ml-[4px] w-[56px] h-[24px] bg-white border border-[#a3aab6] border-b-0 rounded-t-[3px] flex items-center justify-center z-[1]">Home</div>
              <div className="w-[58px] flex items-center justify-center">Insert</div>
              <div className="w-[52px] flex items-center justify-center">View</div>
              <div className="ml-[1px] w-[91px] bg-gradient-to-b from-[#dcd1f2] to-[#e4e6f3] border-x border-[#cfc6e4] flex items-center justify-center">Format</div>
              <div className="ml-auto mr-[4px] flex items-center gap-[10px]">
                <Chevron up />
                <HelpIc s={17} />
              </div>
            </div>
            <Ribbon />
            <div className="flex h-[533px] mt-[4px] ml-[3px] shrink-0">
              <NavPanel />
              <MainPanel />
            </div>
            <StatusBar />
          </div>
          <div className="h-[25px] shrink-0 mt-[1px] bg-gradient-to-b from-[#e9eaee] to-[#bcbfc7] flex items-center border-t border-[#888]">
            <span className="ml-[12px]"><UserIc /></span>
            <span className="w-px h-[21px] bg-[#a5a9b3] ml-[11px]" />
          </div>
          <Taskbar />
        </div>
      </div>
      {/* watermark */}
      <div className="absolute left-[982px] top-[770px] text-[13px] leading-none text-[#777]/80 whitespace-nowrap">运维网</div>
      <div className="absolute left-[893px] top-[784px] text-[18px] leading-none tracking-[0.5px] text-[#8d98a8]/70 whitespace-nowrap">版权所有©陈希章</div>
      <div className="absolute left-[965px] top-[787px] text-[14.5px] leading-none font-bold text-[#1b86c9] whitespace-nowrap">wunv.com</div>
      <svg className="absolute left-[940px] top-[762px]" width="34" height="40" viewBox="0 0 34 40"><path d="M30 2C12 0 0 12 4 26c2 6 7 10 12 12C8 28 8 10 30 2z" fill="#2a8fd0" /><path d="M32 10C20 8 12 18 16 30" fill="none" stroke="#2a8fd0" strokeWidth="2" /></svg>
    </div>
  );
}
